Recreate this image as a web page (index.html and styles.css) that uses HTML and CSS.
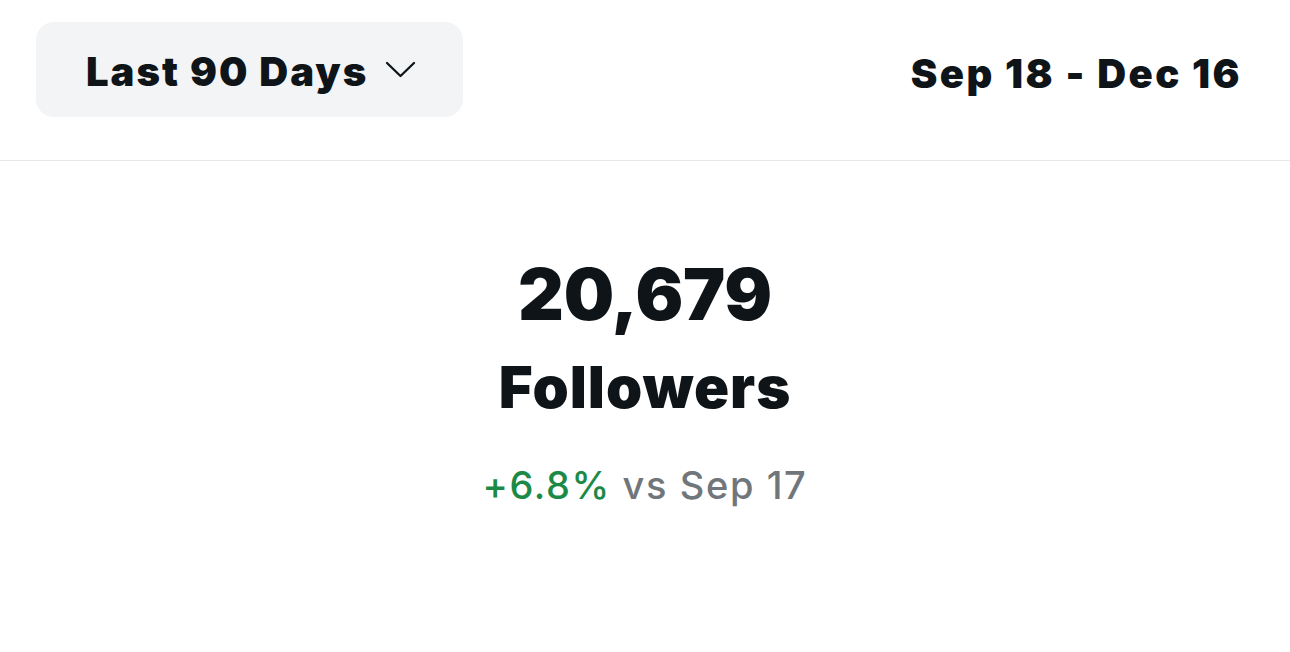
FILE: index.html
```html
<!DOCTYPE html>
<html>
<head>
<meta charset="utf-8">
<link rel="stylesheet" href="styles.css">
</head>
<body>
<header class="top">
  <button class="range">
    <span>Last 90 Days</span>
    <svg class="chev" width="31" height="17" viewBox="0 0 31 17"><path d="M2 2 L15.5 15 L29 2" fill="none" stroke="#0f1419" stroke-width="2.3" stroke-linecap="round" stroke-linejoin="round"/></svg>
  </button>
  <div class="dates">Sep 18 - Dec 16</div>
</header>
<main class="stat">
  <div class="value">20,679</div>
  <div class="label">Followers</div>
  <div class="change"><span class="up">+6.8%</span> vs Sep 17</div>
</main>
</body>
</html>
```
FILE: styles.css
```css
html, body { margin: 0; padding: 0; background: #fff; }
body { font-family: Inter, "Noto Sans", sans-serif; color: #0f1419; width: 1290px; height: 652px; overflow: hidden; }
.top {
  display: flex; justify-content: space-between; align-items: flex-start;
  padding: 22px 48px 0 36px; height: 161px; box-sizing: border-box;
  border-bottom: 1px solid #e6e7e9;
}
.range {
  display: flex; align-items: center; gap: 17px;
  width: 427px; height: 95px; box-sizing: border-box;
  padding: 4px 0 0 50px;
  background: #f3f4f6; border: none; border-radius: 18px;
  font-family: inherit; font-weight: 900; font-size: 40px; color: #0f1419;
  letter-spacing: 2px;
}
.chev { margin-top: -4px; }
.dates { font-weight: 900; font-size: 40px; line-height: 40px; margin-top: 32px; letter-spacing: 2.4px; }
.stat { display: flex; flex-direction: column; align-items: center; padding-top: 98px; }
.value { font-weight: 900; font-size: 71px; line-height: 71px; letter-spacing: -0.3px; }
.label { font-weight: 900; font-size: 58px; line-height: 58px; margin-top: 28px; letter-spacing: 1px; }
.change { font-size: 38px; line-height: 38px; margin-top: 50px; color: #71767b; font-weight: 500; letter-spacing: 1.6px; }
.up { color: #1c8a47; }
```
